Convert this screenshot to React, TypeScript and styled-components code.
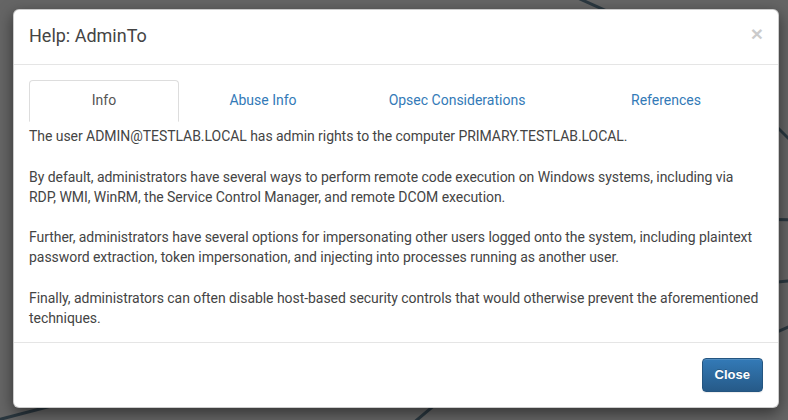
import { createGlobalStyle, styled } from "styled-components";

const GlobalStyle = createGlobalStyle`
  html, body {
    margin: 0;
    padding: 0;
    height: 420px;
    overflow: hidden;
    background: #656565;
    font-family: Roboto, "Liberation Sans", sans-serif;
  }
  * { box-sizing: border-box; }
`;

const Page = styled.div`
  position: relative;
  width: 788px;
  height: 420px;
  padding: 9px 9px 0 13px;
`;

const Graph = styled.svg`
  position: absolute;
  left: 0;
  top: 0;
  width: 788px;
  height: 420px;
`;

const Modal = styled.div`
  position: relative;
  width: 766px;
  display: flex;
  flex-direction: column;
  background: #fff;
  border: 1px solid rgba(0, 0, 0, 0.2);
  border-radius: 6px;
  box-shadow: 0 5px 15px rgba(0, 0, 0, 0.5);
  color: #444;
`;

const Header = styled.div`
  display: flex;
  align-items: center;
  justify-content: space-between;
  padding: 13px 15px 15px 15px;
  border-bottom: 1px solid #e5e5e5;
`;

const Title = styled.h4`
  margin: 0;
  font-size: 18px;
  font-weight: 400;
  line-height: 26px;
`;

const CloseX = styled.button`
  border: none;
  background: none;
  padding: 0;
  margin-top: -6px;
  font-family: "Liberation Sans", Arial, sans-serif;
  font-size: 21px;
  font-weight: 700;
  line-height: 1;
  color: #000;
  opacity: 0.2;
  text-shadow: 0 1px 0 #fff;
  cursor: pointer;
`;

const Body = styled.div`
  padding: 15px 15px 14.5px;
`;

const Tabs = styled.ul`
  display: flex;
  margin: 0;
  padding: 0;
  list-style: none;
  border-bottom: 1px solid #ddd;
`;

const Tab = styled.li<{ $w: number; $active?: boolean }>`
  flex: 0 0 ${(p) => p.$w}px;
  margin-bottom: -1px;
  padding: 9px 15px 11px;
  text-align: center;
  font-size: 14px;
  line-height: 20px;
  border: 1px solid ${(p) => (p.$active ? "#ddd" : "transparent")};
  border-bottom-color: ${(p) => (p.$active ? "#fff" : "transparent")};
  border-radius: 4px 4px 0 0;
  background: #fff;
  color: ${(p) => (p.$active ? "#555" : "#337ab7")};
  cursor: ${(p) => (p.$active ? "default" : "pointer")};
`;

const Content = styled.div`
  padding-top: 4px;
`;

const Para = styled.p`
  margin: 0 0 20.5px;
  font-size: 14px;
  line-height: 20px;
  letter-spacing: -0.05px;
  &:last-child {
    margin-bottom: 0;
  }
`;

const Footer = styled.div`
  display: flex;
  justify-content: flex-end;
  padding: 15px;
  border-top: 1px solid #e5e5e5;
`;

const Button = styled.button`
  padding: 6px 12px;
  font-family: "Liberation Sans", Arial, sans-serif;
  font-size: 13px;
  font-weight: 700;
  line-height: 20px;
  color: #fff;
  text-shadow: 0 -1px 0 rgba(0, 0, 0, 0.2);
  background: linear-gradient(to bottom, #337ab7 0, #265a88 100%);
  border: 1px solid #245580;
  border-radius: 4px;
  box-shadow: inset 0 1px 0 rgba(255, 255, 255, 0.15), 0 1px 1px rgba(0, 0, 0, 0.075);
  cursor: pointer;
`;

const tabs = [
  { label: "Info", w: 150 },
  { label: "Abuse Info", w: 168 },
  { label: "Opsec Considerations", w: 220 },
  { label: "References", w: 198 },
];

const edges = [
  [560, -10, 760, 80],
  [690, 40, 800, 150],
  [690, 218, 800, 220],
  [690, 290, 800, 280],
  [690, 370, 800, 322],
  [-10, 422, 220, 362],
  [405, 430, 500, 350],
];

export default function App() {
  return (
    <>
      <GlobalStyle />
      <Page>
        <Graph viewBox="0 0 788 420">
          {edges.map(([x1, y1, x2, y2], i) => (
            <line key={i} x1={x1} y1={y1} x2={x2} y2={y2} stroke="#2b3840" strokeWidth={3} />
          ))}
        </Graph>
        <Modal>
          <Header>
            <Title>Help: AdminTo</Title>
            <CloseX aria-label="Close">×</CloseX>
          </Header>
          <Body>
            <Tabs>
              {tabs.map((t, i) => (
                <Tab key={t.label} $w={t.w} $active={i === 0}>
                  {t.label}
                </Tab>
              ))}
            </Tabs>
            <Content>
              <Para>The user ADMIN@TESTLAB.LOCAL has admin rights to the computer PRIMARY.TESTLAB.LOCAL.</Para>
              <Para>
                By default, administrators have several ways to perform remote code execution on Windows systems, including via RDP, WMI, WinRM, the Service Control Manager, and remote DCOM execution.
              </Para>
              <Para>
                Further, administrators have several options for impersonating other users logged onto the system, including plaintext password extraction, token impersonation, and injecting into processes running as another user.
              </Para>
              <Para>
                Finally, administrators can often disable host-based security controls that would otherwise prevent the aforementioned techniques.
              </Para>
            </Content>
          </Body>
          <Footer>
            <Button>Close</Button>
          </Footer>
        </Modal>
      </Page>
    </>
  );
}
